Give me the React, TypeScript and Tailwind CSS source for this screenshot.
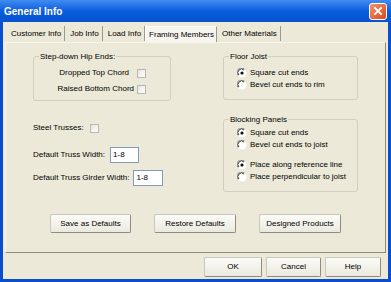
import React from "react";

const Check: React.FC = () => (
  <span className="inline-block w-[9px] h-[9px] border border-[#b8b8b0] bg-gradient-to-br from-[#e6e4dc] to-white" />
);

const Radio: React.FC<{ on?: boolean }> = ({ on }) => (
  <svg width="10" height="10" viewBox="0 0 10 10" className="shrink-0">
    <circle cx="5" cy="5" r="4.5" fill="#ffffff" />
    <path d="M1.2 7.5 A4.3 4.3 0 0 1 7.5 1.2" stroke="#8a8a84" strokeWidth="1" fill="none" />
    <path d="M2 7 A3.3 3.3 0 0 1 7 2" stroke="#404040" strokeWidth="1" fill="none" />
    {on && <circle cx="5" cy="5" r="1.6" fill="#101010" />}
  </svg>
);

const RadioRow: React.FC<{ on?: boolean; label: string }> = ({ on, label }) => (
  <div className="flex items-center h-[12px] gap-[3px]">
    <Radio on={on} />
    <span>{label}</span>
  </div>
);

const Group: React.FC<{ title: string; className?: string; children: React.ReactNode }> = ({
  title,
  className,
  children,
}) => (
  <div className={`relative border border-[#d0cfc0] rounded-[3px] ${className ?? ""}`}>
    <span className="absolute -top-[6px] left-[5px] px-[1px] bg-[#ece9d8] leading-[11px]">{title}</span>
    {children}
  </div>
);

const Btn: React.FC<{ label: string; className?: string }> = ({ label, className }) => (
  <button
    className={`h-[19px] flex items-center justify-center rounded-[2px] border border-[#c9c7ba] border-r-[#8e8c80] border-b-[#8e8c80] bg-gradient-to-b from-[#fbfbf8] to-[#ebe9de] ${className ?? ""}`}
  >
    {label}
  </button>
);

const tabs = ["Customer Info", "Job Info", "Load Info", "Framing Members", "Other Materials"];

export default function App() {
  return (
    <div className="w-[391px] h-[282px] flex flex-col bg-[#0a4ed0] font-['Liberation_Sans',Arial,sans-serif] text-[8px] text-black overflow-hidden">
      {/* title bar */}
      <div className="h-[22px] shrink-0 flex items-center justify-between pl-[4px] pr-[4px] bg-gradient-to-b from-[#3f8cf3] via-[#0a5ddc] to-[#0653d0]">
        <span className="text-white font-bold text-[10px]">General Info</span>
        <div className="w-[18px] h-[17px] rounded-[3px] border border-white bg-gradient-to-br from-[#f0936a] to-[#d8461c] flex items-center justify-center">
          <svg width="10" height="10" viewBox="0 0 10 10">
            <path d="M2 2 L8 8 M8 2 L2 8" stroke="#fff" strokeWidth="1.8" strokeLinecap="square" />
          </svg>
        </div>
      </div>

      {/* body */}
      <div className="flex-1 mx-[3px] mb-[3px] bg-[#ece9d8] flex flex-col px-[2px]">
        <div className="h-[20px] flex items-end pl-[1px] pt-[3px]">
          {tabs.map((t) => {
            const sel = t === "Framing Members";
            return (
              <div
                key={t}
                className={
                  sel
                    ? "h-[17px] pl-[3px] pr-[2px] flex items-center bg-[#f6f5ee] border-t border-l border-white border-r border-r-[#9c9a8e] -mb-[1px]"
                    : "h-[15px] pl-[5px] pr-[3px] flex items-center border-r border-r-[#9c9a8e] mb-[1px]"
                }
              >
                <span>{t}</span>
              </div>
            );
          })}
        </div>

        <div className="h-[211px] border border-[#f6f5ee] border-r-[#8e8c80] border-b-[#8e8c80] flex flex-col">
          <div className="flex pt-[13px]">
            {/* left column */}
            <div className="w-[190px] pl-[27px] flex flex-col">
              <Group title="Step-down Hip Ends:" className="w-[138px] h-[45px] flex flex-col items-end pr-[24px] pt-[10px] gap-[4px]">
                <div className="flex items-center gap-[8px] h-[12px]">
                  <span>Dropped Top Chord</span>
                  <Check />
                </div>
                <div className="flex items-center gap-[3px] h-[12px]">
                  <span>Raised Bottom Chord</span>
                  <Check />
                </div>
              </Group>

              <div className="flex items-center gap-[6px] h-[12px] mt-[21px]">
                <span>Steel Trusses:</span>
                <Check />
              </div>

              <div className="flex items-center gap-[5px] mt-[13px]">
                <span>Default Truss Width:</span>
                <div className="w-[29px] h-[16px] bg-white border border-[#7f9db9] flex items-center pl-[2px]">1-8</div>
              </div>

              <div className="flex items-center gap-[4px] mt-[7px]">
                <span>Default Truss Girder Width:</span>
                <div className="w-[30px] h-[16px] bg-white border border-[#7f9db9] flex items-center pl-[2px]">1-8</div>
              </div>
            </div>

            {/* right column */}
            <div className="pl-[27px] flex flex-col">
              <Group title="Floor Joist" className="w-[135px] h-[44px] pl-[13px] pt-[10px]">
                <RadioRow on label="Square cut ends" />
                <RadioRow label="Bevel cut ends to rim" />
              </Group>
              <Group title="Blocking Panels" className="w-[135px] h-[73px] mt-[19px] pl-[13px] pt-[7px]">
                <RadioRow on label="Square cut ends" />
                <RadioRow label="Bevel cut ends to joist" />
                <div className="h-[8px]" />
                <RadioRow on label="Place along reference line" />
                <RadioRow label="Place perpendicular to joist" />
              </Group>
            </div>
          </div>

          <div className="flex pl-[44px] gap-[23px] mt-[22px]">
            <Btn label="Save as Defaults" className="w-[81px]" />
            <Btn label="Restore Defaults" className="w-[82px]" />
            <Btn label="Designed Products" className="w-[82px]" />
          </div>
        </div>

        <div className="flex justify-end gap-[4px] pr-[5px] mt-[4px]">
          <Btn label="OK" className="w-[58px] h-[20px] border-[#54534c]" />
          <Btn label="Cancel" className="w-[55px] h-[20px]" />
          <Btn label="Help" className="w-[56px] h-[20px]" />
        </div>
      </div>
    </div>
  );
}
